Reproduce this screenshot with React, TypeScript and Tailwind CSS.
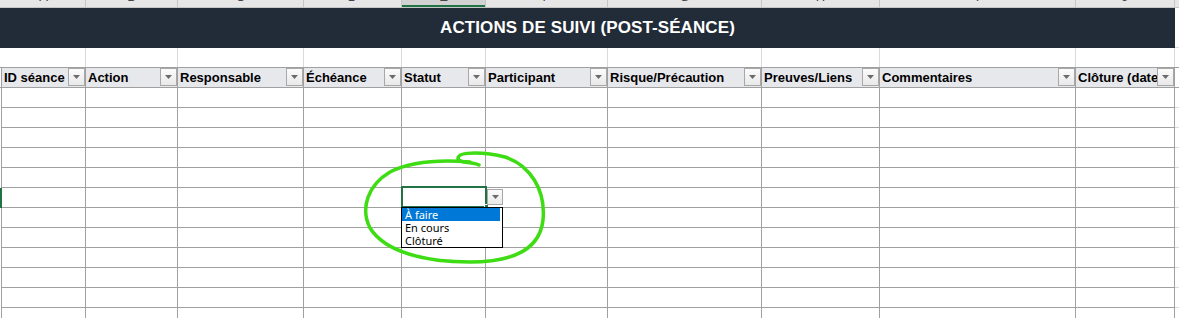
import React from 'react';

const letters = ['A', 'B', 'C', 'D', 'E', 'F', 'G', 'H', 'I', 'J'];

const headers = [
  'ID séance',
  'Action',
  'Responsable',
  'Échéance',
  'Statut',
  'Participant',
  'Risque/Précaution',
  'Preuves/Liens',
  'Commentaires',
  'Clôture (date)',
];

const gridCols =
  'grid grid-cols-[2px_84px_92px_126px_98px_84px_122px_154px_118px_196px_99px_1fr]';

const dataRows = Array.from({ length: 12 }, (_, i) => i);

function FilterButton({ size = 'h-[18px] w-[17px]' }: { size?: string }) {
  return (
    <div
      className={`${size} shrink-0 flex items-center justify-center border border-[#a8a8a8] bg-gradient-to-b from-[#fbfbfb] to-[#e9e9e9]`}
    >
      <svg width="7" height="4" viewBox="0 0 7 4">
        <path d="M0 0 H7 L3.5 4 Z" fill="#6b6b6b" />
      </svg>
    </div>
  );
}

export default function App() {
  return (
    <div className="relative w-[1179px] h-[318px] overflow-hidden bg-white font-['Liberation_Sans',Arial,sans-serif]">
      {/* Column letters (scrolled up, only the bottoms show) */}
      <div className={`${gridCols} h-[8px] bg-[#e6e6e6] border-b border-[#c6c6c6]`}>
        <div />
        {letters.map((l) => (
          <div
            key={l}
            className={`flex flex-col border-r border-[#c6c6c6] ${
              l === 'E' ? 'bg-[#d2d2d2]' : ''
            }`}
          >
            <div className="h-[5px] overflow-hidden text-center">
              <div className="-mt-[10px] text-[13px] leading-[13px] text-[#444]">{l}</div>
            </div>
            <div className={`h-[2px] w-full ${l === 'E' ? 'bg-[#217346]' : ''}`} />
          </div>
        ))}
        <div />
      </div>

      {/* Title band */}
      <div className={`${gridCols} h-[40px]`}>
        <div className="col-span-11 bg-[#222b38] flex items-center justify-center text-white font-bold text-[17px] tracking-[0.1px]">
          ACTIONS DE SUIVI (POST-SÉANCE)
        </div>
        <div className="border-b border-[#dadada]" />
      </div>

      {/* Empty row */}
      <div className={`${gridCols} h-[19px]`}>
        <div />
        {letters.map((l) => (
          <div key={l} className="border-r border-[#dadada]" />
        ))}
        <div />
      </div>

      {/* Table header */}
      <div className={`${gridCols} h-[21px] border-y border-[#a0a0a0]`}>
        <div className="border-r border-[#a0a0a0]" />
        {headers.map((h) => (
          <div
            key={h}
            className="flex items-start bg-[#e7e8ec] border-r border-[#a0a0a0] overflow-hidden"
          >
            <div className="flex-1 min-w-0 overflow-hidden whitespace-nowrap pl-[2px] text-[13px] leading-[20px] font-bold text-black">
              {h}
            </div>
            <FilterButton />
          </div>
        ))}
        <div className="bg-white" />
      </div>

      {/* Data rows */}
      {dataRows.map((r) => (
        <div key={r} className={`${gridCols} h-[20px]`}>
          <div
            className={
              r === 5 ? 'bg-[#217346]' : 'border-r border-[#a0a0a0]'
            }
          />
          {letters.map((l) => (
            <div key={l} className="border-r border-b border-[#a0a0a0]" />
          ))}
          <div className="border-b border-[#dadada]" />
        </div>
      ))}

      {/* Selected cell + validation list */}
      <div className="absolute left-[401px] top-[186px] w-[86px] h-[22px] border-2 border-[#217346]" />
      <div className="absolute left-[484px] top-[204px] w-[5px] h-[5px] bg-[#217346] border border-white" />
      <div className="absolute left-[487px] top-[189px]">
        <FilterButton size="h-[16px] w-[16px]" />
      </div>
      <div className="absolute left-[401px] top-[207px] w-[102px] h-[41px] bg-white border border-black font-['Noto_Sans',sans-serif] text-[11px] leading-[13px]">
        <div className="mr-[2px] bg-[#0078d7] text-white pl-[3px]">À faire</div>
        <div className="pl-[3px] text-black">En cours</div>
        <div className="pl-[3px] text-black">Clôturé</div>
      </div>

      {/* Hand-drawn highlight */}
      <svg
        className="absolute inset-0 pointer-events-none"
        width="1179"
        height="318"
        viewBox="0 0 1179 318"
      >
        <path
          d="M479 165 C472 161, 458 164, 458 158 C459 151, 486 152, 505 157 C530 165, 546 190, 543 220 C540 248, 515 262, 470 262 C425 262, 385 252, 370 228 C360 208, 368 185, 390 172 C412 161, 445 160, 470 162"
          fill="none"
          stroke="#3ddc13"
          strokeWidth="3.5"
          strokeLinecap="round"
          strokeLinejoin="round"
        />
      </svg>
    </div>
  );
}
